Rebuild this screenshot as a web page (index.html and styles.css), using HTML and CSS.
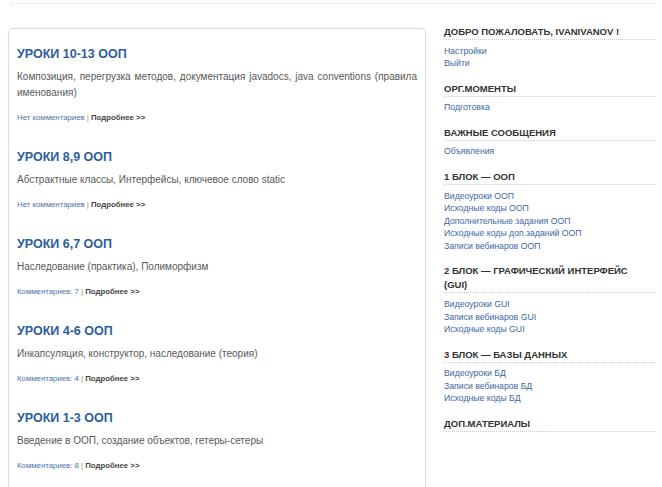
FILE: index.html
```html
<!DOCTYPE html>
<html lang="ru">
<head>
    <meta charset="UTF-8">
    <meta name="viewport" content="width=device-width, initial-scale=1.0">
    <title>Уроки ООП</title>
<link rel="stylesheet" href="styles.css">
</head>
<body>
    <div class="top-line"></div>
    <div class="page">
        <div class="content">
            <div class="post">
                <h2><a href="#">Уроки 10-13 ООП</a></h2>
                <p class="excerpt">Композиция, перегрузка методов, документация javadocs, java conventions (правила именования)</p>
                <div class="meta"><a href="#">Нет комментариев</a> | <a href="#" class="more">Подробнее &gt;&gt;</a></div>
            </div>
            <div class="post">
                <h2><a href="#">Уроки 8,9 ООП</a></h2>
                <p class="excerpt">Абстрактные классы, Интерфейсы, ключевое слово static</p>
                <div class="meta"><a href="#">Нет комментариев</a> | <a href="#" class="more">Подробнее &gt;&gt;</a></div>
            </div>
            <div class="post">
                <h2><a href="#">Уроки 6,7 ООП</a></h2>
                <p class="excerpt">Наследование (практика), Полиморфизм</p>
                <div class="meta"><a href="#">Комментариев: 7</a> | <a href="#" class="more">Подробнее &gt;&gt;</a></div>
            </div>
            <div class="post">
                <h2><a href="#">Уроки 4-6 ООП</a></h2>
                <p class="excerpt">Инкапсуляция, конструктор, наследование (теория)</p>
                <div class="meta"><a href="#">Комментариев: 4</a> | <a href="#" class="more">Подробнее &gt;&gt;</a></div>
            </div>
            <div class="post">
                <h2><a href="#">Уроки 1-3 ООП</a></h2>
                <p class="excerpt">Введение в ООП, создание объектов, гетеры-сетеры</p>
                <div class="meta"><a href="#">Комментариев: 8</a> | <a href="#" class="more">Подробнее &gt;&gt;</a></div>
            </div>
        </div>

        <div class="sidebar">
            <div class="widget">
                <h3>Добро пожаловать, ivanivanov !</h3>
                <ul>
                    <li><a href="#">Настройки</a></li>
                    <li><a href="#">Выйти</a></li>
                </ul>
            </div>
            <div class="widget">
                <h3>Орг.моменты</h3>
                <ul>
                    <li><a href="#">Подготовка</a></li>
                </ul>
            </div>
            <div class="widget">
                <h3>Важные сообщения</h3>
                <ul>
                    <li><a href="#">Объявления</a></li>
                </ul>
            </div>
            <div class="widget">
                <h3>1 блок — ООП</h3>
                <ul>
                    <li><a href="#">Видеоуроки ООП</a></li>
                    <li><a href="#">Исходные коды ООП</a></li>
                    <li><a href="#">Дополнительные задания ООП</a></li>
                    <li><a href="#">Исходные коды доп.заданий ООП</a></li>
                    <li><a href="#">Записи вебинаров ООП</a></li>
                </ul>
            </div>
            <div class="widget">
                <h3>2 блок — Графический интерфейс (GUI)</h3>
                <ul>
                    <li><a href="#">Видеоуроки GUI</a></li>
                    <li><a href="#">Записи вебинаров GUI</a></li>
                    <li><a href="#">Исходные коды GUI</a></li>
                </ul>
            </div>
            <div class="widget">
                <h3>3 блок — Базы данных</h3>
                <ul>
                    <li><a href="#">Видеоуроки БД</a></li>
                    <li><a href="#">Записи вебинаров БД</a></li>
                    <li><a href="#">Исходные коды БД</a></li>
                </ul>
            </div>
            <div class="widget">
                <h3>Доп.материалы</h3>
            </div>
        </div>
    </div>
</body>
</html>
```

FILE: styles.css
```css
body {
    margin: 0;
    background: #fff;
    font-family: "Liberation Sans", Arial, sans-serif;
    color: #555;
}

a {
    text-decoration: none;
    color: #3d67a3;
}

.top-line {
    height: 3px;
    margin: 0 7px 0 10px;
    border-bottom: 1px dotted #ddd;
}

.page {
    display: flex;
    align-items: flex-start;
    gap: 18px;
    padding: 0 7px 0 8px;
    margin-top: 24px;
}

.content {
    width: 400px;
    min-height: 500px;
    padding: 17px 8px 0 8px;
    border: 1px solid #dcdcdc;
    border-radius: 5px;
    box-shadow: 0 0 2px rgba(0, 0, 0, 0.06);
}

.post {
    margin-bottom: 25px;
}

.post h2 {
    margin: 0 0 7px;
    font-size: 12.5px;
    line-height: 16px;
    font-weight: bold;
    text-transform: uppercase;
}

.post h2 a {
    color: #2c5d9c;
}

.excerpt {
    margin: 0;
    font-size: 10px;
    line-height: 16px;
    text-align: justify;
    color: #595959;
}

.meta {
    margin-top: 11px;
    font-size: 7.8px;
    line-height: 12px;
    color: #888;
}

.meta a {
    color: #4a73ad;
}

.meta a.more {
    color: #444;
    font-weight: bold;
}

.sidebar {
    flex: 1;
    margin-top: -3px;
}

.widget {
    margin-bottom: 11.8px;
}

.widget h3 {
    margin: 0;
    padding-right: 20px;
    font-size: 9.5px;
    line-height: 14px;
    font-weight: bold;
    text-transform: uppercase;
    color: #333;
    border-bottom: 1px dotted #ccc;
}

.widget ul {
    list-style: none;
    margin: 4.7px 0 0;
    padding: 0;
}

.widget li {
    font-size: 8.7px;
    line-height: 12.6px;
}
```
